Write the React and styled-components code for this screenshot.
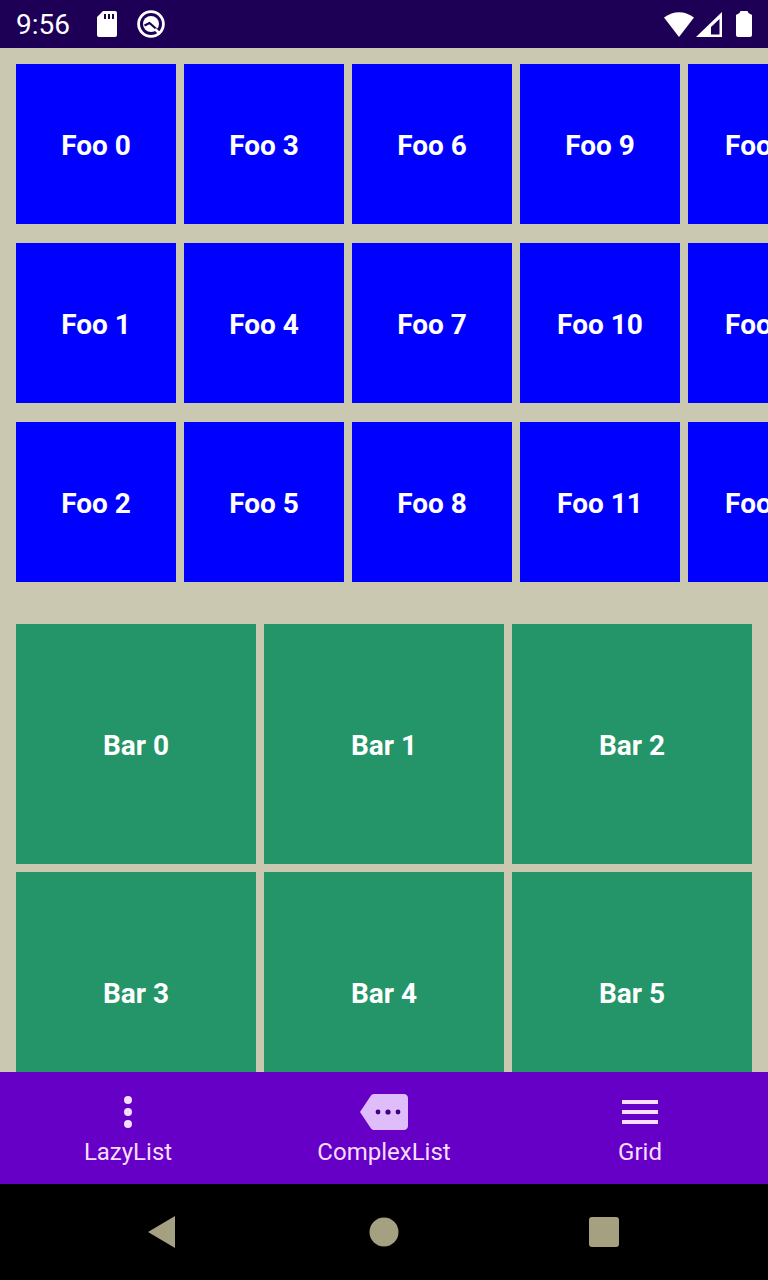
import React from "react";
import styled, { createGlobalStyle } from "styled-components";

const GlobalStyle = createGlobalStyle`
  * { box-sizing: border-box; }
  body { margin: 0; background: #000; font-family: Roboto, "Liberation Sans", sans-serif; }
`;

const Screen = styled.div`
  width: 768px;
  height: 1280px;
  display: flex;
  flex-direction: column;
  overflow: hidden;
  background: #000;
`;

const StatusBar = styled.header`
  height: 48px;
  flex: none;
  display: flex;
  align-items: center;
  padding: 0 16px;
  background: #1d0055;
  color: #fff;
`;

const Clock = styled.span`
  width: 80px;
  font-size: 28px;
  line-height: 48px;
  padding-top: 2px;
`;

const StatusIcon = styled.svg`
  display: block;
  flex: none;
  margin-left: ${(p) => p.$gap || 0}px;
`;

const Spacer = styled.div`
  flex: 1;
`;

const Content = styled.main`
  flex: 1;
  min-height: 0;
  overflow: hidden;
  padding: 16px 16px 0;
  background: #cbc8b2;
`;

const FooGrid = styled.section`
  display: grid;
  grid-auto-flow: column;
  grid-template-rows: repeat(3, 160px);
  grid-auto-columns: 160px;
  gap: 19px 8px;
`;

const BarGrid = styled.section`
  margin-top: 42px;
  display: grid;
  grid-template-columns: repeat(3, 240px);
  grid-auto-rows: 240px;
  gap: 8px;
`;

const Tile = styled.div`
  display: flex;
  align-items: center;
  justify-content: center;
  padding-top: 3px;
  background: ${(p) => p.$color};
  color: #fff;
  font-size: 28px;
  font-weight: 700;
  white-space: nowrap;
`;

const TabBar = styled.nav`
  height: 112px;
  flex: none;
  display: grid;
  grid-template-columns: repeat(3, 1fr);
  background: #6700c6;
`;

const Tab = styled.div`
  display: flex;
  flex-direction: column;
  align-items: center;
  padding-top: 16px;
  color: #f6deff;
  font-size: 24px;
  line-height: 32px;
`;

const TabIcon = styled.svg`
  display: block;
  width: 48px;
  height: 48px;
  fill: ${(p) => p.$fill || "currentColor"};
`;

const SystemNav = styled.footer`
  height: 96px;
  flex: none;
  display: flex;
  align-items: center;
  justify-content: space-between;
  padding: 0 148px;
  background: #000;
`;

const NavIcon = styled.svg`
  display: block;
  width: 32px;
  height: 32px;
  fill: #a4a080;
`;

const foos = Array.from({ length: 15 }, (_, i) => `Foo ${i}`);
const bars = Array.from({ length: 6 }, (_, i) => `Bar ${i}`);

export default function App() {
  return (
    <>
      <GlobalStyle />
      <Screen>
        <StatusBar>
          <Clock>9:56</Clock>
          <StatusIcon width="22" height="26" viewBox="0 0 22 26">
            <path fill="#fff" fillRule="evenodd" d="M7 0H19Q21 0 21 2V24Q21 26 19 26H3Q1 26 1 24V6ZM8 3V8H10V3ZM12 3V8H14V3ZM16 3V8H18V3Z" />
          </StatusIcon>
          <StatusIcon $gap={19} width="28" height="28" viewBox="0 0 28 28">
            <circle cx="14" cy="14" r="12.4" fill="none" stroke="#fff" strokeWidth="2.8" />
            <circle cx="14" cy="14" r="8" fill="#fff" />
            <path d="M7.5 15.5L12.5 13L20.5 20" fill="none" stroke="#1d0055" strokeWidth="2.2" />
            <path d="M18 19L23 24" stroke="#fff" strokeWidth="2.6" />
          </StatusIcon>
          <Spacer />
          <StatusIcon width="30" height="25" viewBox="0 0 30 25">
            <path fill="#fff" d="M0 5.5Q15-5 30 5.5L15 25Z" />
          </StatusIcon>
          <StatusIcon $gap={2} width="26" height="25" viewBox="0 0 26 25">
            <path fill="#fff" fillRule="evenodd" d="M0 25L26 0V25ZM23.5 7L15 15V22.5H23.5Z" />
          </StatusIcon>
          <StatusIcon $gap={14} width="16" height="26" viewBox="0 0 16 26">
            <path fill="#fff" d="M4.5 0H11.5L12.5 2L16 4V24Q16 26 14 26H2Q0 26 0 24V4L3.5 2Z" />
          </StatusIcon>
        </StatusBar>
        <Content>
          <FooGrid>
            {foos.map((label) => (
              <Tile key={label} $color="#0000ff">{label}</Tile>
            ))}
          </FooGrid>
          <BarGrid>
            {bars.map((label) => (
              <Tile key={label} $color="#249568">{label}</Tile>
            ))}
          </BarGrid>
        </Content>
        <TabBar>
          <Tab>
            <TabIcon viewBox="0 0 24 24">
              <circle cx="12" cy="6" r="2" />
              <circle cx="12" cy="12" r="2" />
              <circle cx="12" cy="18" r="2" />
            </TabIcon>
            LazyList
          </Tab>
          <Tab>
            <TabIcon viewBox="0 0 24 24" $fill="#dfbcfa">
              <path d="M22 3H7c-.69 0-1.23.35-1.59.88L0 12l5.41 8.11c.36.53.97.89 1.66.89H22c1.1 0 2-.9 2-2V5c0-1.1-.9-2-2-2z" />
              <g fill="#420080">
                <circle cx="9" cy="12" r="1.2" />
                <circle cx="14" cy="12" r="1.3" />
                <circle cx="19" cy="12" r="1.2" />
              </g>
            </TabIcon>
            ComplexList
          </Tab>
          <Tab>
            <TabIcon viewBox="0 0 24 24">
              <path d="M3 18h18v-2H3v2zm0-5h18v-2H3v2zm0-7v2h18V6H3z" />
            </TabIcon>
            Grid
          </Tab>
        </TabBar>
        <SystemNav>
          <NavIcon viewBox="0 0 32 32">
            <path d="M0 16L27 0V32Z" />
          </NavIcon>
          <NavIcon viewBox="0 0 32 32">
            <circle cx="16" cy="16" r="14.5" />
          </NavIcon>
          <NavIcon viewBox="0 0 32 32">
            <rect x="1" y="1" width="30" height="30" rx="3" />
          </NavIcon>
        </SystemNav>
      </Screen>
    </>
  );
}
